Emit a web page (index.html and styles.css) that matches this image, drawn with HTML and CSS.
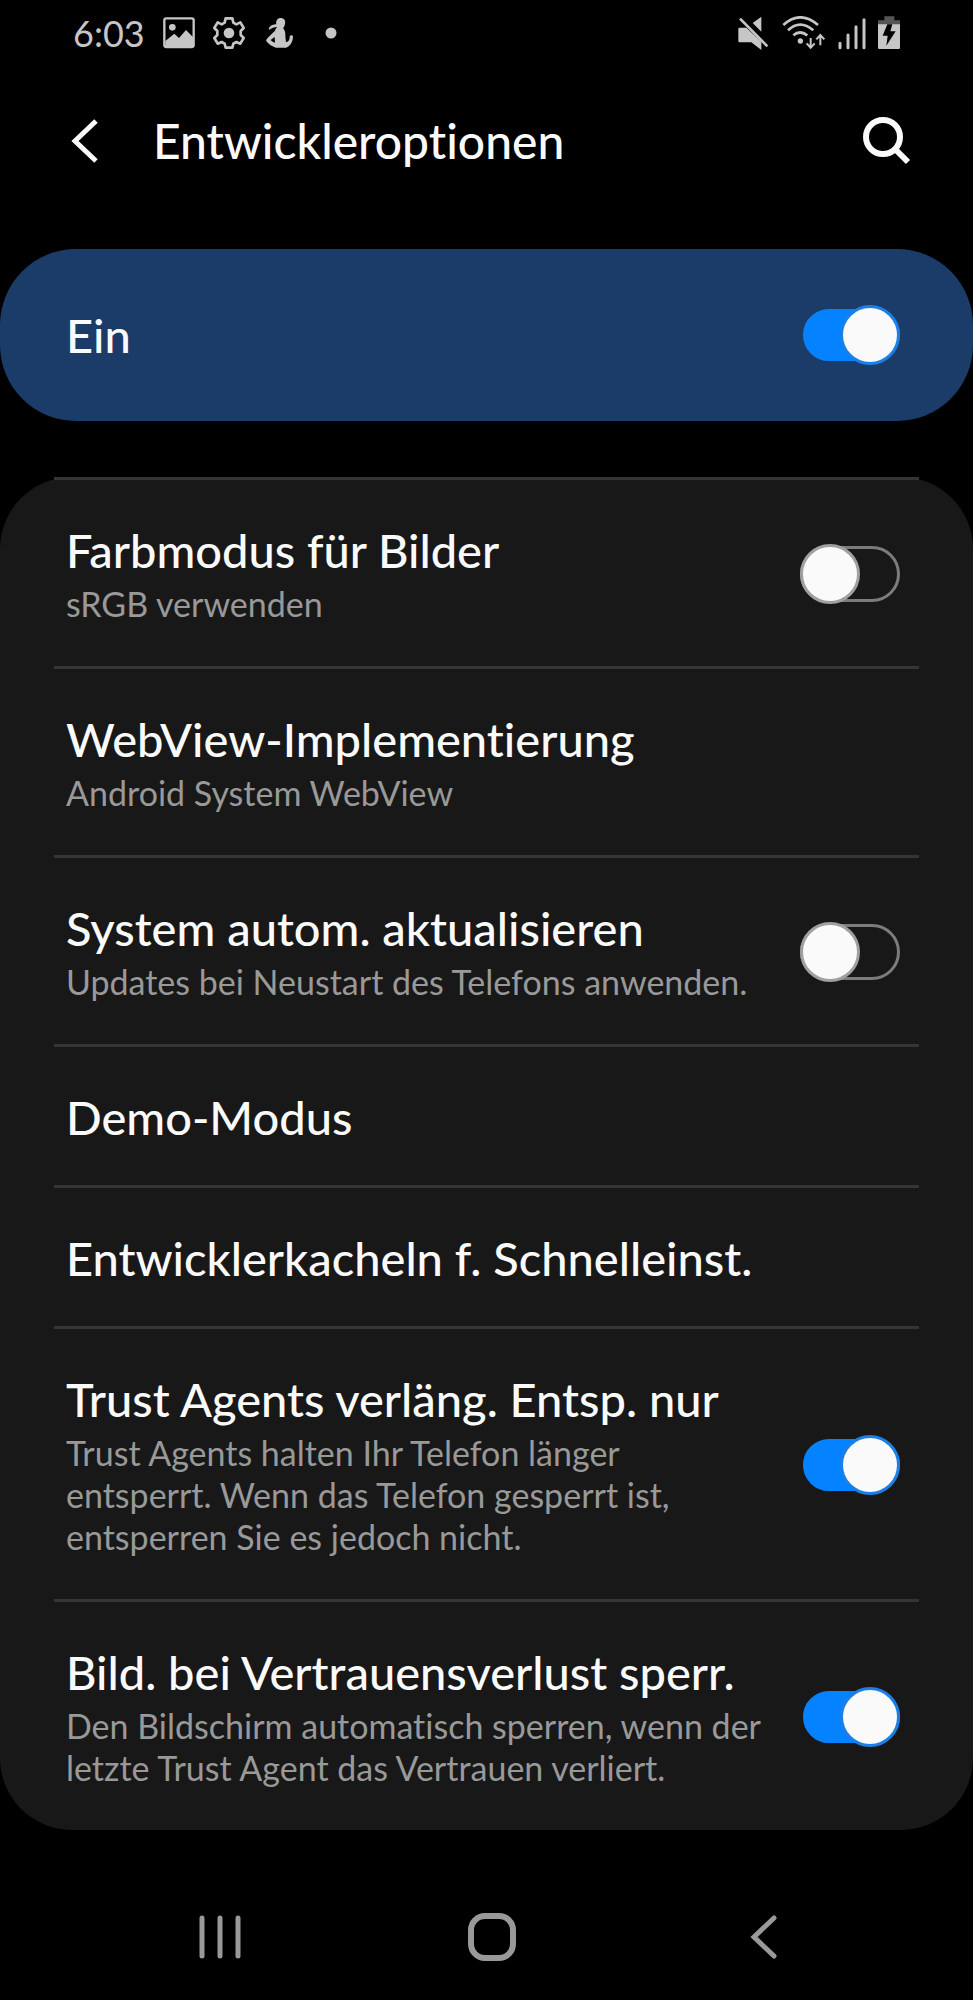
FILE: index.html
```html
<!DOCTYPE html>
<html lang="de">
<head>
<meta charset="utf-8">
<meta name="viewport" content="width=device-width, initial-scale=1">
<title>Entwickleroptionen</title>
<link rel="stylesheet" href="styles.css">
</head>
<body>
<div class="status-bar">
  <div class="status-left">
    <span class="clock">6:03</span>
    <svg class="status-icon" width="32" height="32" viewBox="0 0 96 96" aria-hidden="true">
      <rect x="4" y="4" width="88" height="86" rx="6" fill="none" stroke="currentColor" stroke-width="7"/>
      <circle cx="28" cy="31" r="10"/>
      <path d="M7 90V72L34 50L48 63L69 39L92 62V90Z"/>
    </svg>
    <svg class="status-icon" width="32" height="32" viewBox="0 0 96 96" aria-hidden="true">
      <path d="M38 4H58L61 17L70 22L82 16L92 33L83 42V54L92 63L82 80L70 75L61 80L58 92H38L35 80L26 75L14 80L4 63L13 54V42L4 33L14 16L26 22L35 17Z" fill="none" stroke="currentColor" stroke-width="8" stroke-linejoin="round"/>
      <circle cx="48" cy="48" r="16"/>
    </svg>
    <svg class="status-icon" width="32" height="32" viewBox="-8 0 96 96" aria-hidden="true">
      <path fill-rule="evenodd" d="M43 3C54 2 61 10 58 20C57 26 55 31 52 33C57 39 60 46 59 58L61 76C69 75 73 66 72 57C75 54 79 54 82 57C82 74 75 87 61 92H31C17 87 5 80 1 70C6 60 18 52 28 41C30 35 33 32 35 30C26 30 17 34 11 38L9 35C15 24 24 22 32 22C30 13 34 5 43 3ZM27 60L15 69C19 73 23 76 28 77Z"/>
    </svg>
    <svg class="status-icon status-more" width="12" height="12" viewBox="0 0 12 12" aria-hidden="true"><circle cx="6" cy="6" r="5.5"/></svg>
  </div>
  <div class="status-right">
    <svg class="status-icon" width="32" height="34" viewBox="0 0 96 102" aria-hidden="true">
      <path d="M4 35H25L70 77V102L40 79H4Q1 79 1 75V39Q1 35 4 35ZM44 21L70 2V47Z"/>
      <path d="M6 8L88 91" stroke="currentColor" stroke-width="8"/>
    </svg>
    <svg class="status-icon" width="44" height="34" viewBox="0 0 132 102" aria-hidden="true">
      <g fill="none" stroke="currentColor" stroke-width="8">
        <path d="M4 27Q54 -19 108 27M18 43Q54 9 94 43M34 58Q54 41 76 58"/>
        <path d="M86 66V93M74 82L86 95L98 82M115 88V58M103 70L115 57L127 70" stroke-width="6"/>
      </g>
      <circle cx="55" cy="75" r="8"/>
    </svg>
    <svg class="status-icon" width="28" height="34" viewBox="0 0 84 102" aria-hidden="true">
      <path d="M6 82V95M30 57V95M54 32V95M78 11V95" fill="none" stroke="currentColor" stroke-width="9" stroke-linecap="round"/>
    </svg>
    <svg class="status-icon" width="22" height="34" viewBox="0 0 66 102" aria-hidden="true">
      <path d="M19 1H49V13H66V27H0V13H19Z" fill="#555"/>
      <path d="M0 25H66V95Q66 99 62 99H4Q0 99 0 95Z"/>
      <path d="M28 25H43L37 46H53L25 89L29 59H14Z" fill="#000"/>
    </svg>
  </div>
</div>

<header class="app-bar">
  <button class="icon-button" type="button" aria-label="Zurück">
    <svg width="28" height="46" viewBox="0 0 28 46" aria-hidden="true"><path d="M25 3L4 23L25 43" fill="none" stroke="currentColor" stroke-width="5"/></svg>
  </button>
  <h1 class="page-title">Entwickleroptionen</h1>
  <button class="icon-button" type="button" aria-label="Suchen">
    <svg width="48" height="48" viewBox="0 0 48 48" aria-hidden="true"><circle cx="20" cy="20" r="17" fill="none" stroke="currentColor" stroke-width="6"/><path d="M31 31L45 45" stroke="currentColor" stroke-width="6"/></svg>
  </button>
</header>

<main>
  <label class="master">
    <span class="item-title">Ein</span>
    <input class="switch" type="checkbox" role="switch" checked>
  </label>

  <ul class="options">
    <li><label class="item">
      <span class="item-text"><span class="item-title">Farbmodus für Bilder</span><span class="item-note">sRGB verwenden</span></span>
      <input class="switch" type="checkbox" role="switch">
    </label></li>
    <li><button class="item" type="button">
      <span class="item-text"><span class="item-title">WebView-Implementierung</span><span class="item-note">Android System WebView</span></span>
    </button></li>
    <li><label class="item">
      <span class="item-text"><span class="item-title">System autom. aktualisieren</span><span class="item-note">Updates bei Neustart des Telefons anwenden.</span></span>
      <input class="switch" type="checkbox" role="switch">
    </label></li>
    <li><button class="item" type="button">
      <span class="item-text"><span class="item-title">Demo-Modus</span></span>
    </button></li>
    <li><button class="item" type="button">
      <span class="item-text"><span class="item-title">Entwicklerkacheln f. Schnelleinst.</span></span>
    </button></li>
    <li><label class="item">
      <span class="item-text"><span class="item-title">Trust Agents verläng. Entsp. nur</span><span class="item-note">Trust Agents halten Ihr Telefon länger entsperrt. Wenn das Telefon gesperrt ist, entsperren Sie es jedoch nicht.</span></span>
      <input class="switch" type="checkbox" role="switch" checked>
    </label></li>
    <li><label class="item">
      <span class="item-text"><span class="item-title">Bild. bei Vertrauensverlust sperr.</span><span class="item-note">Den Bildschirm automatisch sperren, wenn der letzte Trust Agent das Vertrauen verliert.</span></span>
      <input class="switch" type="checkbox" role="switch" checked>
    </label></li>
  </ul>
</main>

<nav class="nav-bar" aria-label="Systemnavigation">
  <button class="icon-button" type="button" aria-label="Letzte Apps">
    <svg width="44" height="48" viewBox="0 0 44 48" aria-hidden="true"><path d="M4 5V43M22 5V43M40 5V43" stroke="currentColor" stroke-width="5" stroke-linecap="round"/></svg>
  </button>
  <button class="icon-button" type="button" aria-label="Startseite">
    <svg width="48" height="48" viewBox="0 0 48 48" aria-hidden="true"><rect x="3" y="3" width="42" height="42" rx="14" fill="none" stroke="currentColor" stroke-width="6"/></svg>
  </button>
  <button class="icon-button" type="button" aria-label="Zurück">
    <svg width="28" height="48" viewBox="0 0 28 48" aria-hidden="true"><path d="M24 5L4 24L24 43" fill="none" stroke="currentColor" stroke-width="5" stroke-linecap="round"/></svg>
  </button>
</nav>
</body>
</html>
```
FILE: styles.css
```css
*,
*::before,
*::after {
  box-sizing: border-box;
}

body {
  margin: 0;
  min-height: 100vh;
  display: flex;
  flex-direction: column;
  background: #000;
  color: #fafafa;
  font-family: Lato, "Open Sans", sans-serif;
  font-variant-ligatures: none;
}

button {
  padding: 0;
  border: 0;
  background: none;
  color: inherit;
  font: inherit;
  font-variant-ligatures: none;
  text-align: left;
  cursor: pointer;
}

svg {
  display: block;
  fill: currentColor;
}

.status-bar {
  display: flex;
  justify-content: space-between;
  align-items: center;
  height: 66px;
  padding: 0 73px;
  color: #c6c6c6;
}

.status-left {
  display: flex;
  align-items: center;
  gap: 18px;
}

.status-right {
  display: flex;
  align-items: center;
  gap: 12px;
}

.status-more {
  margin-left: 12px;
}

.clock {
  font-size: 36px;
  line-height: 48px;
}

.app-bar {
  display: flex;
  align-items: center;
  height: 150px;
  padding: 0 62px 0 71px;
}

.page-title {
  flex: 1;
  margin: 0 0 0 54px;
  font-size: 48px;
  line-height: 60px;
  font-weight: 500;
}

.icon-button {
  display: flex;
  align-items: center;
  justify-content: center;
}

main {
  margin-top: 33px;
}

.master {
  display: flex;
  align-items: center;
  justify-content: space-between;
  min-height: 172px;
  padding: 0 73px 0 66px;
  border-radius: 76px;
  background: #1b3b68;
}

.options {
  margin: 56px 0 0;
  padding: 0 54px;
  list-style: none;
  border-radius: 72px;
  background: #181818;
}

.options li {
  border-top: 3px solid #353535;
}

.item {
  display: flex;
  align-items: center;
  gap: 36px;
  width: 100%;
  padding: 43px 19px 41px 12px;
}

.item-text {
  flex: 1;
  display: flex;
  flex-direction: column;
  gap: 6px;
}

.item-title {
  font-size: 47px;
  line-height: 54px;
  font-weight: 500;
}

.item-note {
  color: #999;
  font-size: 34px;
  line-height: 42px;
}

.switch {
  appearance: none;
  flex: none;
  display: grid;
  align-items: center;
  width: 100px;
  height: 60px;
  margin: 0;
}

.switch::before,
.switch::after {
  content: "";
  grid-area: 1 / 1;
}

.switch::before {
  height: 56px;
  border: 3px solid #7c7c7c;
  border-radius: 28px;
}

.switch::after {
  width: 60px;
  height: 60px;
  border: 3px solid #a0a0a0;
  border-radius: 50%;
  background: #fafafa;
}

.switch:checked::before {
  height: 52px;
  margin-left: 3px;
  border-color: #0582ff;
  background: #0582ff;
}

.switch:checked::after {
  justify-self: end;
  border-color: #1b7fe6;
}

.nav-bar {
  display: grid;
  grid-template-columns: repeat(3, 1fr);
  align-items: center;
  justify-items: center;
  margin-top: auto;
  height: 126px;
  padding: 0 73px 0 84px;
  color: #999;
}
```
